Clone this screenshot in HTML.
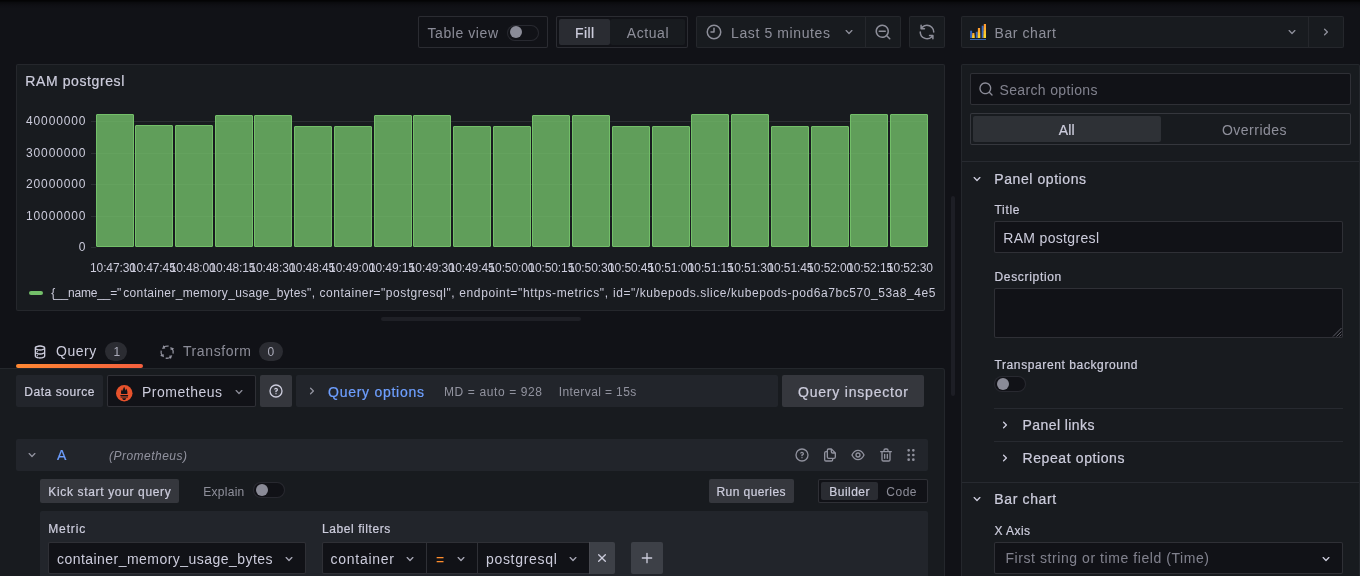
<!DOCTYPE html>
<html lang="en"><head><meta charset="utf-8"><title>Edit panel - RAM postgresl - Grafana</title>
<style>
*{box-sizing:border-box;margin:0;padding:0}
html,body{width:1360px;height:576px;overflow:hidden;background:#111217}
body{position:relative;font-family:"Liberation Sans",Arial,sans-serif;color:rgb(204,204,220)}
.a{position:absolute}
.t{position:absolute;white-space:pre;line-height:20px;height:20px}
.m{-webkit-text-stroke:0.22px currentColor}
.box{position:absolute;border:1px solid rgba(204,204,220,0.075);border-radius:2px}
.btn{position:absolute;background:rgba(204,204,220,0.16);border-radius:2px}
.inp{position:absolute;background:#111217;border:1px solid rgba(204,204,220,0.16);border-radius:2px}
.sec{position:absolute;background:#22252b;border-radius:2px}
.hl{position:absolute;height:1px;background:rgba(204,204,220,0.09)}
.vl{position:absolute;width:1px;background:rgba(204,204,220,0.12)}
.tog{position:absolute;width:32px;height:16px;border-radius:8px;background:#111217;border:1px solid rgba(204,204,220,0.13)}
.tog i{position:absolute;left:2px;top:1px;width:12px;height:12px;border-radius:6px;background:rgba(204,204,220,0.65)}
svg{position:absolute;overflow:visible}
.ic{fill:none;stroke:rgba(204,204,220,0.65);stroke-width:1.4;stroke-linecap:round;stroke-linejoin:round}
.ip{fill:none;stroke:rgb(204,204,220);stroke-width:1.4;stroke-linecap:round;stroke-linejoin:round}
#texts{position:absolute;left:0;top:0;width:1360px;height:576px;will-change:transform}

</style></head><body>
<!-- ===== toolbar ===== -->
<div class="box" style="left:418px;top:16px;width:130px;height:32px;background:#111217;border-color:rgba(204,204,220,0.14)"></div>
<div class="tog" style="left:507px;top:25px"><i style="top:0"></i></div>
<div class="box" style="left:556px;top:16px;width:132px;height:32px;background:#111217;border-color:rgba(204,204,220,0.14)"></div>
<div class="a" style="left:610px;top:19px;width:75px;height:26px;background:#181b1f;border-radius:2px"></div>
<div class="a" style="left:559px;top:19px;width:51px;height:26px;background:#2a2c32;border-radius:2px"></div>
<div class="box" style="left:696px;top:16px;width:170px;height:32px;background:#181b1f;border-radius:2px 0 0 2px"></div>
<div class="box" style="left:865px;top:16px;width:36px;height:32px;background:#181b1f;border-radius:0 2px 2px 0"></div>
<div class="box" style="left:909px;top:16px;width:36px;height:32px;background:#181b1f"></div>
<div class="box" style="left:961px;top:16px;width:348px;height:32px;background:#181b1f;border-radius:2px 0 0 2px"></div>
<div class="box" style="left:1308px;top:16px;width:36px;height:32px;background:#181b1f;border-radius:0 2px 2px 0"></div>
<!-- clock -->
<svg style="left:705px;top:23px" width="18" height="18" viewBox="0 0 24 24"><path fill="rgba(204,204,220,0.65)" d="M12,2A10,10,0,1,0,22,12,10.011,10.011,0,0,0,12,2Zm0,18a8,8,0,1,1,8-8A8.009,8.009,0,0,1,12,20ZM12,6a1,1,0,0,0-1,1v4H8a1,1,0,0,0,0,2h4a1,1,0,0,0,1-1V7A1,1,0,0,0,12,6Z"/></svg>
<!-- chevrons -->
<svg style="left:841px;top:24px" width="16" height="16" viewBox="0 0 24 24"><path fill="rgba(204,204,220,0.65)" d="M17,9.17a1,1,0,0,0-1.41,0L12,12.71,8.46,9.17a1,1,0,0,0-1.41,0,1,1,0,0,0,0,1.42l4.24,4.24a1,1,0,0,0,1.42,0L17,10.590A1,1,0,0,0,17,9.170Z"/></svg>
<svg style="left:1284px;top:24px" width="16" height="16" viewBox="0 0 24 24"><path fill="rgba(204,204,220,0.65)" d="M17,9.17a1,1,0,0,0-1.41,0L12,12.71,8.46,9.17a1,1,0,0,0-1.41,0,1,1,0,0,0,0,1.42l4.24,4.24a1,1,0,0,0,1.42,0L17,10.590A1,1,0,0,0,17,9.170Z"/></svg>
<svg style="left:1318px;top:24px" width="16" height="16" viewBox="0 0 24 24"><path fill="rgba(204,204,220,0.65)" d="M14.83,11.29,10.59,7.05a1,1,0,0,0-1.42,0,1,1,0,0,0,0,1.41L12.71,12,9.170,15.540a1,1,0,0,0,0,1.410,1,1,0,0,0,.710.290,1,1,0,0,0,.710-.290l4.240-4.240A1,1,0,0,0,14.830,11.290Z"/></svg>
<!-- zoom out -->
<svg style="left:874px;top:23px" width="18" height="18" viewBox="0 0 24 24"><path fill="rgba(204,204,220,0.65)" d="M21.71,20.29,18,16.610A9,9,0,1,0,16.610,18l3.680,3.680a1,1,0,0,0,1.420,0A1,1,0,0,0,21.710,20.290ZM11,18a7,7,0,1,1,7-7A7,7,0,0,1,11,18Zm4-8H7a1,1,0,0,0,0,2h8a1,1,0,0,0,0-2Z"/></svg>
<!-- refresh -->
<svg style="left:918px;top:23px" width="18" height="18" viewBox="0 0 24 24"><path fill="rgba(204,204,220,0.65)" d="M19.91,15.51H15.38a1,1,0,0,0,0,2h2.4A8,8,0,0,1,4,12a1,1,0,0,0-2,0,10,10,0,0,0,16.880,7.230V21a1,1,0,0,0,2,0V16.500A1,1,0,0,0,19.910,15.510ZM12,2A10,10,0,0,0,5.120,4.770V3a1,1,0,0,0-2,0V7.500a1,1,0,0,0,1,1h4.500a1,1,0,0,0,0-2h-2.400A8,8,0,0,1,20,12a1,1,0,0,0,2,0A10,10,0,0,0,12,2Z"/></svg>
<!-- bar chart icon -->
<svg style="left:970px;top:24px" width="16" height="16" viewBox="0 0 16 16"><g fill="#3a69bf"><rect x="0.1" y="6.7" width="2" height="7.3"/><rect x="5.8" y="7.8" width="2" height="6.2"/><rect x="11.7" y="1.7" width="2" height="12.3"/><rect x="0" y="15" width="16" height="1" fill="#3865ab"/></g><g><rect x="2.3" y="9.00" width="2.1" height="5.00" fill="#fea62f"/><rect x="2.3" y="10.67" width="2.1" height="3.33" fill="#fcbd2d"/><rect x="2.3" y="12.33" width="2.1" height="1.67" fill="#fbd52b"/><rect x="7.9" y="4.00" width="2.2" height="10.00" fill="#ff9f30"/><rect x="7.9" y="6.50" width="2.2" height="7.50" fill="#fdb12e"/><rect x="7.9" y="9.00" width="2.2" height="5.00" fill="#fcc32c"/><rect x="7.9" y="11.50" width="2.2" height="2.50" fill="#fbd52b"/><rect x="13.8" y="0.00" width="2.2" height="14.00" fill="#ff9d30"/><rect x="13.8" y="3.50" width="2.2" height="10.50" fill="#fdaf2e"/><rect x="13.8" y="7.00" width="2.2" height="7.00" fill="#fcc22c"/><rect x="13.8" y="10.50" width="2.2" height="3.50" fill="#fbd52b"/></g></svg>

<!-- ===== panel ===== -->
<div class="box" style="left:16px;top:64px;width:929px;height:247px;background:#181b1f"></div>
<svg id="chart" style="left:0;top:0" width="960" height="320" viewBox="0 0 960 320">
<g id="grid" stroke="rgba(240,250,255,0.09)" stroke-width="1">
<path d="M91 121.5H928M91 153.5H928M91 184.5H928M91 216.5H928M91 247.5H96"/>
</g>
<g id="bars" fill="rgba(115,191,105,0.8)" stroke="#73bf69" stroke-width="1">
<rect rx="0.5" x="96.5" y="114.5" width="37" height="132"/>
<rect rx="0.5" x="135.5" y="125.5" width="37" height="121"/>
<rect rx="0.5" x="175.5" y="125.5" width="37" height="121"/>
<rect rx="0.5" x="215.5" y="115.5" width="37" height="131"/>
<rect rx="0.5" x="254.5" y="115.5" width="37" height="131"/>
<rect rx="0.5" x="294.5" y="126.5" width="37" height="120"/>
<rect rx="0.5" x="334.5" y="126.5" width="37" height="120"/>
<rect rx="0.5" x="374.5" y="115.5" width="37" height="131"/>
<rect rx="0.5" x="413.5" y="115.5" width="37" height="131"/>
<rect rx="0.5" x="453.5" y="126.5" width="37" height="120"/>
<rect rx="0.5" x="493.5" y="126.5" width="37" height="120"/>
<rect rx="0.5" x="532.5" y="115.5" width="37" height="131"/>
<rect rx="0.5" x="572.5" y="115.5" width="37" height="131"/>
<rect rx="0.5" x="612.5" y="126.5" width="37" height="120"/>
<rect rx="0.5" x="652.5" y="126.5" width="37" height="120"/>
<rect rx="0.5" x="691.5" y="114.5" width="37" height="132"/>
<rect rx="0.5" x="731.5" y="114.5" width="37" height="132"/>
<rect rx="0.5" x="771.5" y="126.5" width="37" height="120"/>
<rect rx="0.5" x="811.5" y="126.5" width="37" height="120"/>
<rect rx="0.5" x="850.5" y="114.5" width="37" height="132"/>
<rect rx="0.5" x="890.5" y="114.5" width="37" height="132"/>
</g>
</svg>
<div class="a" style="left:29px;top:291px;width:14px;height:4px;border-radius:2px;background:#73bf69"></div>

<!-- ===== tabs ===== -->
<div class="a" style="left:16px;top:364px;width:127px;height:4px;border-radius:2px;background:linear-gradient(90deg,#ff8833 0%,#f55f3e 100%)"></div>
<div class="a" style="left:105px;top:342px;width:22px;height:19px;border-radius:10px;background:rgba(204,204,220,0.14)"></div>
<div class="a" style="left:259px;top:342px;width:24px;height:19px;border-radius:10px;background:rgba(204,204,220,0.14)"></div>
<!-- database icon -->
<svg style="left:32px;top:344px" width="16" height="16" viewBox="0 0 24 24"><path fill="rgb(204,204,220)" d="M8,16.5a1,1,0,1,0,1,1A1,1,0,0,0,8,16.5ZM12,2C8,2,4,3.37,4,6V18c0,2.630,4,4,8,4s8-1.370,8-4V6C20,3.370,16,2,12,2Zm6,16c0,.710-2.280,2-6,2s-6-1.290-6-2V14.730A13.160,13.160,0,0,0,12,16a13.160,13.160,0,0,0,6-1.270Zm0-6c0,.710-2.280,2-6,2s-6-1.290-6-2V8.730A13.160,13.160,0,0,0,12,10a13.160,13.160,0,0,0,6-1.270ZM12,8C8.280,8,6,6.710,6,6s2.280-2,6-2,6,1.290,6,2S15.720,8,12,8ZM8,10.500a1,1,0,1,0,1,1A1,1,0,0,0,8,10.500Z"/></svg>
<!-- transform icon -->
<svg style="left:159px;top:344px" width="16" height="16" viewBox="-8.150 -8.150 16 16"><g fill="rgba(204,204,220,0.65)"><g transform="rotate(0)"><path d="M-5.09 -3.18L-3.63 -7.13L-1.82 -3.56Z"/><path d="M-3.23 -5.17A6.1 6.1 0 0 1 1.48 -5.92" stroke="rgba(204,204,220,0.65)" stroke-width="1.300" fill="none"/></g><g transform="rotate(90)"><path d="M-5.09 -3.18L-3.63 -7.13L-1.82 -3.56Z"/><path d="M-3.23 -5.17A6.1 6.1 0 0 1 1.48 -5.92" stroke="rgba(204,204,220,0.65)" stroke-width="1.300" fill="none"/></g><g transform="rotate(180)"><path d="M-5.09 -3.18L-3.63 -7.13L-1.82 -3.56Z"/><path d="M-3.23 -5.17A6.1 6.1 0 0 1 1.48 -5.92" stroke="rgba(204,204,220,0.65)" stroke-width="1.300" fill="none"/></g><g transform="rotate(270)"><path d="M-5.09 -3.18L-3.63 -7.13L-1.82 -3.56Z"/><path d="M-3.23 -5.17A6.1 6.1 0 0 1 1.48 -5.92" stroke="rgba(204,204,220,0.65)" stroke-width="1.300" fill="none"/></g></g></svg>

<!-- ===== query content ===== -->
<div class="a" style="left:-4px;top:368px;width:949px;height:220px;background:#181b1f;border:1px solid rgba(204,204,220,0.07);border-radius:3px"></div>
<div class="sec" style="left:16px;top:375px;width:87px;height:32px"></div>
<div class="inp" style="left:107px;top:375px;width:149px;height:32px"></div>
<div class="btn" style="left:260px;top:375px;width:32px;height:32px"></div>
<div class="sec" style="left:296px;top:375px;width:482px;height:32px"></div>
<div class="btn" style="left:782px;top:375px;width:142px;height:32px"></div>
<div class="sec" style="left:16px;top:439px;width:912px;height:32px"></div>
<div class="btn" style="left:40px;top:479px;width:139px;height:24px"></div>
<div class="tog" style="left:253px;top:482px"><i></i></div>
<div class="btn" style="left:709px;top:479px;width:85px;height:24px"></div>
<div class="box" style="left:818px;top:479px;width:110px;height:24px;background:#111217;border-color:rgba(204,204,220,0.16)"></div>
<div class="a" style="left:821px;top:482px;width:57px;height:18px;background:#2a2c32;border-radius:2px"></div>
<div class="sec" style="left:40px;top:511px;width:888px;height:80px"></div>
<div class="inp" style="left:48px;top:542px;width:258px;height:32px"></div>
<div class="inp" style="left:322px;top:542px;width:105px;height:32px;border-radius:2px 0 0 2px"></div>
<div class="inp" style="left:426px;top:542px;width:52px;height:32px;border-radius:0"></div>
<div class="inp" style="left:477px;top:542px;width:113px;height:32px;border-radius:0"></div>
<div class="btn" style="left:589px;top:542px;width:26px;height:32px;border-radius:0 2px 2px 0"></div>
<div class="btn" style="left:631px;top:542px;width:32px;height:32px"></div>
<!-- prometheus icon -->
<svg style="left:115.800px;top:384.500px" width="16.5" height="16.5" viewBox="0 0 16.5 16.5"><circle cx="8.25" cy="8.25" r="8.25" fill="#e6522c"/><path fill="#111217" d="M8.2 1.700C8.900 3.400 9.300 4.500 9.300 5.700 9.800 5.100 10 4.300 10 3.600 11.300 5.200 11.700 7 11.300 8.900H5.200C4.700 7.200 5.100 5.600 6.200 4.200 6.300 4.900 6.500 5.500 7 5.900 6.900 4.400 7.400 3.100 8.200 1.700ZM4.400 9.900H12.100V10.900H4.400ZM4.600 11.600H11.900V12.500H4.600ZM6.100 13.200H10.300C10 14.400 9.200 15 8.200 15S6.400 14.400 6.100 13.200Z"/></svg>
<svg style="left:231px;top:384px" width="16" height="16" viewBox="0 0 24 24"><path fill="rgba(204,204,220,0.65)" d="M17,9.17a1,1,0,0,0-1.41,0L12,12.71,8.46,9.17a1,1,0,0,0-1.41,0,1,1,0,0,0,0,1.42l4.24,4.24a1,1,0,0,0,1.42,0L17,10.590A1,1,0,0,0,17,9.170Z"/></svg>
<!-- help btn -->
<svg style="left:268px;top:383px" width="16" height="16" viewBox="0 0 24 24"><path fill="rgb(204,204,220)" d="M11.29,15.29a1.58,1.58,0,0,0-.12.15.76.76,0,0,0-.09.18.64.64,0,0,0-.06.18,1.36,1.36,0,0,0,0,.2.84.84,0,0,0,.08.38.9.9,0,0,0,.54.54.94.94,0,0,0,.76,0,.9.9,0,0,0,.54-.54A1,1,0,0,0,13,16a1,1,0,0,0-.29-.71A1,1,0,0,0,11.290,15.290ZM12,2A10,10,0,1,0,22,12,10,10,0,0,0,12,2Zm0,18a8,8,0,1,1,8-8A8,8,0,0,1,12,20ZM12,7A3,3,0,0,0,9.4,8.500a1,1,0,1,0,1.730,1A1,1,0,0,1,12,9a1,1,0,0,1,0,2,1,1,0,0,0-1,1v1a1,1,0,0,0,2,0v-.180A3,3,0,0,0,12,7Z"/></svg>
<svg style="left:303.75px;top:383px" width="16" height="16" viewBox="0 0 24 24"><path fill="rgba(204,204,220,0.65)" d="M14.83,11.29,10.59,7.05a1,1,0,0,0-1.42,0,1,1,0,0,0,0,1.41L12.71,12,9.170,15.540a1,1,0,0,0,0,1.410,1,1,0,0,0,.710.290,1,1,0,0,0,.710-.290l4.240-4.240A1,1,0,0,0,14.830,11.290Z"/></svg>
<!-- row A icons -->
<svg style="left:24px;top:447px" width="16" height="16" viewBox="0 0 24 24"><path fill="rgba(204,204,220,0.65)" d="M17,9.17a1,1,0,0,0-1.41,0L12,12.71,8.46,9.17a1,1,0,0,0-1.41,0,1,1,0,0,0,0,1.42l4.24,4.24a1,1,0,0,0,1.42,0L17,10.590A1,1,0,0,0,17,9.170Z"/></svg>
<svg style="left:794px;top:447px" width="16" height="16" viewBox="0 0 24 24"><path fill="rgba(204,204,220,0.65)" d="M11.29,15.29a1.58,1.58,0,0,0-.12.15.76.76,0,0,0-.09.18.64.64,0,0,0-.06.18,1.36,1.36,0,0,0,0,.2.84.84,0,0,0,.08.38.9.9,0,0,0,.54.54.94.94,0,0,0,.76,0,.9.9,0,0,0,.54-.54A1,1,0,0,0,13,16a1,1,0,0,0-.29-.71A1,1,0,0,0,11.290,15.290ZM12,2A10,10,0,1,0,22,12,10,10,0,0,0,12,2Zm0,18a8,8,0,1,1,8-8A8,8,0,0,1,12,20ZM12,7A3,3,0,0,0,9.4,8.500a1,1,0,1,0,1.730,1A1,1,0,0,1,12,9a1,1,0,0,1,0,2,1,1,0,0,0-1,1v1a1,1,0,0,0,2,0v-.180A3,3,0,0,0,12,7Z"/></svg>
<svg style="left:822px;top:447px" width="16" height="16" viewBox="0 0 24 24"><path fill="rgba(204,204,220,0.65)" d="M21,8.94a1.31,1.31,0,0,0-.06-.27l0-.09a1.07,1.07,0,0,0-.19-.28h0l-6-6h0a1.07,1.07,0,0,0-.28-.19.32.32,0,0,0-.09,0A.88.88,0,0,0,14.050,2H10A3,3,0,0,0,7,5V6H6A3,3,0,0,0,3,9V19a3,3,0,0,0,3,3h8a3,3,0,0,0,3-3V18h1a3,3,0,0,0,3-3V9S21,9,21,8.940ZM15,5.410,17.590,8H16a1,1,0,0,1-1-1ZM15,19a1,1,0,0,1-1,1H6a1,1,0,0,1-1-1V9A1,1,0,0,1,6,8H7v7a3,3,0,0,0,3,3h5Zm4-4a1,1,0,0,1-1,1H10a1,1,0,0,1-1-1V5a1,1,0,0,1,1-1h3V7a3,3,0,0,0,3,3h3Z"/></svg>
<svg style="left:850px;top:447px" width="16" height="16" viewBox="0 0 24 24"><path fill="rgba(204,204,220,0.65)" d="M21.92,11.6C19.9,6.91,16.1,4,12,4S4.1,6.91,2.08,11.6a1,1,0,0,0,0,.8C4.1,17.09,7.9,20,12,20s7.9-2.91,9.92-7.6A1,1,0,0,0,21.920,11.600ZM12,18c-3.170,0-6.170-2.290-7.900-6C5.830,8.290,8.830,6,12,6s6.170,2.290,7.900,6C18.170,15.710,15.170,18,12,18ZM12,8a4,4,0,1,0,4,4A4,4,0,0,0,12,8Zm0,6a2,2,0,1,1,2-2A2,2,0,0,1,12,14Z"/></svg>
<svg style="left:878px;top:447px" width="16" height="16" viewBox="0 0 24 24"><path fill="rgba(204,204,220,0.65)" d="M10,18a1,1,0,0,0,1-1V11a1,1,0,0,0-2,0v6A1,1,0,0,0,10,18ZM20,6H16V5a3,3,0,0,0-3-3H11A3,3,0,0,0,8,5V6H4A1,1,0,0,0,4,8H5V19a3,3,0,0,0,3,3h8a3,3,0,0,0,3-3V8h1a1,1,0,0,0,0-2ZM10,5a1,1,0,0,1,1-1h2a1,1,0,0,1,1,1V6H10Zm7,14a1,1,0,0,1-1,1H8a1,1,0,0,1-1-1V8H17Zm-3-1a1,1,0,0,0,1-1V11a1,1,0,0,0-2,0v6A1,1,0,0,0,14,18Z"/></svg>
<svg style="left:903px;top:447px" width="16" height="16" viewBox="0 0 24 24"><path fill="rgba(204,204,220,0.65)" d="M8.5,10a2,2,0,1,0,2,2A2,2,0,0,0,8.5,10Zm0,7a2,2,0,1,0,2,2A2,2,0,0,0,8.5,17Zm7-10a2,2,0,1,0-2-2A2,2,0,0,0,15.5,7Zm-7-4a2,2,0,1,0,2,2A2,2,0,0,0,8.500,3Zm7,14a2,2,0,1,0,2,2A2,2,0,0,0,15.500,17Zm0-7a2,2,0,1,0,2,2A2,2,0,0,0,15.500,10Z"/></svg>
<!-- select chevrons -->
<svg style="left:281px;top:551px" width="16" height="16" viewBox="0 0 24 24"><path fill="rgba(204,204,220,0.8)" d="M17,9.17a1,1,0,0,0-1.41,0L12,12.71,8.46,9.17a1,1,0,0,0-1.41,0,1,1,0,0,0,0,1.42l4.24,4.24a1,1,0,0,0,1.42,0L17,10.590A1,1,0,0,0,17,9.170Z"/></svg>
<svg style="left:402px;top:551px" width="16" height="16" viewBox="0 0 24 24"><path fill="rgba(204,204,220,0.8)" d="M17,9.17a1,1,0,0,0-1.41,0L12,12.71,8.46,9.17a1,1,0,0,0-1.41,0,1,1,0,0,0,0,1.42l4.24,4.24a1,1,0,0,0,1.42,0L17,10.590A1,1,0,0,0,17,9.170Z"/></svg>
<svg style="left:453px;top:551px" width="16" height="16" viewBox="0 0 24 24"><path fill="rgba(204,204,220,0.8)" d="M17,9.17a1,1,0,0,0-1.41,0L12,12.71,8.46,9.17a1,1,0,0,0-1.41,0,1,1,0,0,0,0,1.42l4.24,4.24a1,1,0,0,0,1.42,0L17,10.590A1,1,0,0,0,17,9.170Z"/></svg>
<svg style="left:565px;top:551px" width="16" height="16" viewBox="0 0 24 24"><path fill="rgba(204,204,220,0.8)" d="M17,9.17a1,1,0,0,0-1.41,0L12,12.71,8.46,9.17a1,1,0,0,0-1.41,0,1,1,0,0,0,0,1.42l4.24,4.24a1,1,0,0,0,1.42,0L17,10.590A1,1,0,0,0,17,9.170Z"/></svg>
<svg style="left:593.75px;top:550px" width="16" height="16" viewBox="0 0 24 24"><path fill="rgb(204,204,220)" d="M13.41,12l4.3-4.29a1,1,0,1,0-1.42-1.420L12,10.590,7.710,6.290A1,1,0,0,0,6.290,7.710L10.590,12l-4.300,4.290a1,1,0,0,0,0,1.420,1,1,0,0,0,1.420,0L12,13.410l4.290,4.300a1,1,0,0,0,1.420,0,1,1,0,0,0,0-1.420Z"/></svg>
<svg style="left:639px;top:550px" width="16" height="16" viewBox="0 0 24 24"><path fill="rgb(204,204,220)" d="M19,11H13V5a1,1,0,0,0-2,0v6H5a1,1,0,0,0,0,2h6v6a1,1,0,0,0,2,0V13h6a1,1,0,0,0,0-2Z"/></svg>

<!-- splitter handle -->
<div class="a" style="left:381px;top:317px;width:200px;height:4px;border-radius:2px;background:rgba(204,204,220,0.08)"></div>
<!-- scrollbar -->
<div class="a" style="left:951px;top:196px;width:4px;height:200px;border-radius:2px;background:rgba(204,204,220,0.07)"></div>

<!-- ===== right pane ===== -->
<div class="a" style="left:961px;top:64px;width:399px;height:530px;background:#181b1f;border:1px solid rgba(204,204,220,0.07);border-radius:2px"></div>
<div class="inp" style="left:970px;top:73px;width:381px;height:32px"></div>
<svg style="left:978px;top:81px" width="16" height="16" viewBox="0 0 24 24"><path fill="rgba(204,204,220,0.65)" d="M21.71,20.29,18,16.610A9,9,0,1,0,16.610,18l3.680,3.680a1,1,0,0,0,1.420,0A1,1,0,0,0,21.710,20.290ZM11,18a7,7,0,1,1,7-7A7,7,0,0,1,11,18Z"/></svg>
<div class="box" style="left:970px;top:113px;width:381px;height:32px;background:#181b1f;border-color:rgba(204,204,220,0.16)"></div>
<div class="a" style="left:973px;top:116px;width:188px;height:26px;background:#2e3136;border-radius:2px"></div>
<div class="hl" style="left:962px;top:161px;width:397px"></div>
<svg style="left:969px;top:171px" width="16" height="16" viewBox="0 0 24 24"><path fill="rgb(204,204,220)" d="M17,9.17a1,1,0,0,0-1.41,0L12,12.71,8.46,9.17a1,1,0,0,0-1.41,0,1,1,0,0,0,0,1.42l4.24,4.24a1,1,0,0,0,1.42,0L17,10.590A1,1,0,0,0,17,9.170Z"/></svg>
<div class="inp" style="left:994px;top:221px;width:349px;height:32px"></div>
<div class="inp" style="left:994px;top:288px;width:349px;height:50px"></div>
<svg style="left:1332px;top:327px" width="10" height="10" viewBox="0 0 10 10"><path d="M9.500 1 1 9.500M9.500 4.500 4.500 9.500M9.500 7.500 7.500 9.500" stroke="rgba(204,204,220,0.4)" stroke-width="1" fill="none"/></svg>
<div class="tog" style="left:994px;top:376px"><i></i></div>
<div class="hl" style="left:994px;top:408px;width:349px"></div>
<svg style="left:996.5px;top:417px" width="16" height="16" viewBox="0 0 24 24"><path fill="rgb(204,204,220)" d="M14.83,11.29,10.59,7.05a1,1,0,0,0-1.42,0,1,1,0,0,0,0,1.41L12.71,12,9.170,15.540a1,1,0,0,0,0,1.410,1,1,0,0,0,.710.290,1,1,0,0,0,.710-.290l4.240-4.240A1,1,0,0,0,14.830,11.290Z"/></svg>
<div class="hl" style="left:994px;top:441px;width:349px"></div>
<svg style="left:996.5px;top:450px" width="16" height="16" viewBox="0 0 24 24"><path fill="rgb(204,204,220)" d="M14.83,11.29,10.59,7.05a1,1,0,0,0-1.42,0,1,1,0,0,0,0,1.41L12.71,12,9.170,15.540a1,1,0,0,0,0,1.410,1,1,0,0,0,.710.290,1,1,0,0,0,.710-.290l4.240-4.240A1,1,0,0,0,14.830,11.290Z"/></svg>
<div class="hl" style="left:962px;top:482px;width:397px"></div>
<svg style="left:969px;top:491px" width="16" height="16" viewBox="0 0 24 24"><path fill="rgb(204,204,220)" d="M17,9.17a1,1,0,0,0-1.41,0L12,12.71,8.46,9.17a1,1,0,0,0-1.41,0,1,1,0,0,0,0,1.42l4.24,4.24a1,1,0,0,0,1.42,0L17,10.590A1,1,0,0,0,17,9.170Z"/></svg>
<div class="inp" style="left:994px;top:542px;width:349px;height:32px"></div>
<svg style="left:1317.75px;top:551px" width="16" height="16" viewBox="0 0 24 24"><path fill="rgb(204,204,220)" d="M17,9.17a1,1,0,0,0-1.41,0L12,12.71,8.46,9.17a1,1,0,0,0-1.41,0,1,1,0,0,0,0,1.42l4.24,4.24a1,1,0,0,0,1.42,0L17,10.590A1,1,0,0,0,17,9.170Z"/></svg>

<!-- top shadow -->
<div class="a" style="left:0;top:0;width:1360px;height:10px;background:linear-gradient(180deg,rgba(0,0,0,0.85) 0%,rgba(0,0,0,0.7) 12%,rgba(0,0,0,0.4) 25%,rgba(0,0,0,0.17) 50%,rgba(0,0,0,0.03) 80%,rgba(0,0,0,0) 100%)"></div>

<div id="texts">
<span class="t" style="left:427.50px;top:22.80px;font-size:14px;color:rgba(204,204,220,0.65);letter-spacing:0.569px;">Table view</span>
<span class="t m" style="left:575.00px;top:22.80px;font-size:14px;color:rgb(204,204,220);letter-spacing:0.370px;">Fill</span>
<span class="t" style="left:626.75px;top:22.80px;font-size:14px;color:rgba(204,204,220,0.65);letter-spacing:0.566px;">Actual</span>
<span class="t" style="left:731.00px;top:22.80px;font-size:14px;color:rgba(204,204,220,0.65);letter-spacing:0.611px;">Last 5 minutes</span>
<span class="t" style="left:994.50px;top:22.80px;font-size:14px;color:rgba(204,204,220,0.65);letter-spacing:0.586px;">Bar chart</span>
<span class="t" style="left:999.50px;top:79.80px;font-size:14px;color:rgba(204,204,220,0.6);letter-spacing:0.353px;">Search options</span>
<span class="t m" style="left:1058.75px;top:119.50px;font-size:14px;color:rgb(204,204,220);letter-spacing:0.094px;">All</span>
<span class="t" style="left:1222.00px;top:119.50px;font-size:14px;color:rgba(204,204,220,0.65);letter-spacing:0.477px;">Overrides</span>
<span class="t m" style="left:994.25px;top:168.75px;font-size:14px;color:rgb(204,204,220);letter-spacing:0.576px;">Panel options</span>
<span class="t m" style="left:994.50px;top:200.00px;font-size:12px;color:rgb(204,204,220);letter-spacing:0.691px;">Title</span>
<span class="t" style="left:1003.25px;top:228.00px;font-size:14px;color:rgb(204,204,220);letter-spacing:0.328px;">RAM postgresl</span>
<span class="t m" style="left:994.50px;top:266.75px;font-size:12px;color:rgb(204,204,220);letter-spacing:0.672px;">Description</span>
<span class="t m" style="left:994.50px;top:354.50px;font-size:12px;color:rgb(204,204,220);letter-spacing:0.604px;">Transparent background</span>
<span class="t m" style="left:1022.50px;top:415.00px;font-size:14px;color:rgb(204,204,220);letter-spacing:0.430px;">Panel links</span>
<span class="t m" style="left:1022.50px;top:448.00px;font-size:14px;color:rgb(204,204,220);letter-spacing:0.601px;">Repeat options</span>
<span class="t m" style="left:994.25px;top:489.00px;font-size:14px;color:rgb(204,204,220);letter-spacing:0.648px;">Bar chart</span>
<span class="t m" style="left:994.50px;top:520.50px;font-size:12px;color:rgb(204,204,220);letter-spacing:0.428px;">X Axis</span>
<span class="t" style="left:1005.50px;top:548.00px;font-size:14px;color:rgba(204,204,220,0.6);letter-spacing:0.566px;">First string or time field (Time)</span>
<span class="t m" style="left:25.25px;top:71.40px;font-size:14px;color:rgb(204,204,220);letter-spacing:0.599px;">RAM postgresl</span>
<span class="t" style="left:26.00px;top:110.55px;font-size:12px;color:rgb(204,204,220);letter-spacing:0.873px;">40000000</span>
<span class="t" style="left:26.00px;top:142.55px;font-size:12px;color:rgb(204,204,220);letter-spacing:0.873px;">30000000</span>
<span class="t" style="left:26.00px;top:173.55px;font-size:12px;color:rgb(204,204,220);letter-spacing:0.873px;">20000000</span>
<span class="t" style="left:26.00px;top:205.55px;font-size:12px;color:rgb(204,204,220);letter-spacing:0.873px;">10000000</span>
<span class="t" style="left:78.70px;top:236.60px;font-size:12px;color:rgb(204,204,220);letter-spacing:0.000px;">0</span>
<span class="t" style="left:90.00px;top:257.90px;font-size:12px;color:rgb(204,204,220);letter-spacing:-0.103px;">10:47:30</span>
<span class="t" style="left:129.85px;top:257.90px;font-size:12px;color:rgb(204,204,220);letter-spacing:-0.103px;">10:47:45</span>
<span class="t" style="left:169.70px;top:257.90px;font-size:12px;color:rgb(204,204,220);letter-spacing:-0.103px;">10:48:00</span>
<span class="t" style="left:209.55px;top:257.90px;font-size:12px;color:rgb(204,204,220);letter-spacing:-0.103px;">10:48:15</span>
<span class="t" style="left:249.40px;top:257.90px;font-size:12px;color:rgb(204,204,220);letter-spacing:-0.103px;">10:48:30</span>
<span class="t" style="left:289.25px;top:257.90px;font-size:12px;color:rgb(204,204,220);letter-spacing:-0.103px;">10:48:45</span>
<span class="t" style="left:329.10px;top:257.90px;font-size:12px;color:rgb(204,204,220);letter-spacing:-0.103px;">10:49:00</span>
<span class="t" style="left:368.95px;top:257.90px;font-size:12px;color:rgb(204,204,220);letter-spacing:-0.103px;">10:49:15</span>
<span class="t" style="left:408.80px;top:257.90px;font-size:12px;color:rgb(204,204,220);letter-spacing:-0.103px;">10:49:30</span>
<span class="t" style="left:448.65px;top:257.90px;font-size:12px;color:rgb(204,204,220);letter-spacing:-0.103px;">10:49:45</span>
<span class="t" style="left:488.50px;top:257.90px;font-size:12px;color:rgb(204,204,220);letter-spacing:-0.103px;">10:50:00</span>
<span class="t" style="left:528.35px;top:257.90px;font-size:12px;color:rgb(204,204,220);letter-spacing:-0.103px;">10:50:15</span>
<span class="t" style="left:568.20px;top:257.90px;font-size:12px;color:rgb(204,204,220);letter-spacing:-0.103px;">10:50:30</span>
<span class="t" style="left:608.05px;top:257.90px;font-size:12px;color:rgb(204,204,220);letter-spacing:-0.103px;">10:50:45</span>
<span class="t" style="left:647.90px;top:257.90px;font-size:12px;color:rgb(204,204,220);letter-spacing:-0.103px;">10:51:00</span>
<span class="t" style="left:687.75px;top:257.90px;font-size:12px;color:rgb(204,204,220);letter-spacing:-0.103px;">10:51:15</span>
<span class="t" style="left:727.60px;top:257.90px;font-size:12px;color:rgb(204,204,220);letter-spacing:-0.103px;">10:51:30</span>
<span class="t" style="left:767.45px;top:257.90px;font-size:12px;color:rgb(204,204,220);letter-spacing:-0.103px;">10:51:45</span>
<span class="t" style="left:807.30px;top:257.90px;font-size:12px;color:rgb(204,204,220);letter-spacing:-0.103px;">10:52:00</span>
<span class="t" style="left:847.15px;top:257.90px;font-size:12px;color:rgb(204,204,220);letter-spacing:-0.103px;">10:52:15</span>
<span class="t" style="left:887.00px;top:257.90px;font-size:12px;color:rgb(204,204,220);letter-spacing:-0.103px;">10:52:30</span>
<span class="t" style="left:51.25px;top:283.00px;font-size:12px;color:rgb(204,204,220);letter-spacing:-0.200px;">{__name__="</span>
<span class="t" style="left:123.25px;top:283.00px;font-size:12px;color:rgb(204,204,220);letter-spacing:0.346px;">container_memory_usage_bytes",</span>
<span class="t" style="left:319.50px;top:283.00px;font-size:12px;color:rgb(204,204,220);letter-spacing:0.518px;">container="postgresql",</span>
<span class="t" style="left:459.25px;top:283.00px;font-size:12px;color:rgb(204,204,220);letter-spacing:0.632px;">endpoint="https-metrics",</span>
<span class="t" style="left:613.00px;top:283.00px;font-size:12px;color:rgb(204,204,220);letter-spacing:0.562px;">id="/kubepods.slice/kubepods-pod6a7bc570_53a8_4e5</span>
<span class="t" style="left:56.00px;top:341.00px;font-size:14px;color:rgb(204,204,220);letter-spacing:0.531px;">Query</span>
<span class="t" style="left:113.50px;top:341.75px;font-size:12px;color:rgba(204,204,220,0.8);letter-spacing:0.000px;">1</span>
<span class="t" style="left:183.00px;top:341.00px;font-size:14px;color:rgba(204,204,220,0.65);letter-spacing:0.590px;">Transform</span>
<span class="t" style="left:267.50px;top:341.75px;font-size:12px;color:rgba(204,204,220,0.8);letter-spacing:0.000px;">0</span>
<span class="t m" style="left:24.25px;top:381.50px;font-size:12px;color:rgb(204,204,220);letter-spacing:0.555px;">Data source</span>
<span class="t" style="left:142.00px;top:381.50px;font-size:14px;color:rgb(204,204,220);letter-spacing:0.502px;">Prometheus</span>
<span class="t m" style="left:328.00px;top:381.50px;font-size:14px;color:#6e9fff;letter-spacing:0.736px;">Query options</span>
<span class="t" style="left:444.00px;top:381.50px;font-size:12px;color:rgba(204,204,220,0.65);letter-spacing:0.615px;">MD = auto = 928</span>
<span class="t" style="left:558.75px;top:381.50px;font-size:12px;color:rgba(204,204,220,0.65);letter-spacing:0.394px;">Interval = 15s</span>
<span class="t m" style="left:798.00px;top:381.50px;font-size:14px;color:rgb(204,204,220);letter-spacing:0.798px;">Query inspector</span>
<span class="t m" style="left:57.00px;top:445.00px;font-size:14px;color:#6e9fff;letter-spacing:0.000px;">A</span>
<span class="t" style="left:109.00px;top:445.50px;font-size:12px;color:rgba(204,204,220,0.65);letter-spacing:0.482px;font-style:italic;">(Prometheus)</span>
<span class="t m" style="left:48.25px;top:482.00px;font-size:12px;color:rgb(204,204,220);letter-spacing:0.656px;">Kick start your query</span>
<span class="t" style="left:203.25px;top:482.00px;font-size:12px;color:rgba(204,204,220,0.65);letter-spacing:0.273px;">Explain</span>
<span class="t m" style="left:716.50px;top:482.00px;font-size:12px;color:rgb(204,204,220);letter-spacing:0.428px;">Run queries</span>
<span class="t m" style="left:829.25px;top:482.00px;font-size:12px;color:rgb(204,204,220);letter-spacing:0.482px;">Builder</span>
<span class="t" style="left:886.25px;top:482.00px;font-size:12px;color:rgba(204,204,220,0.65);letter-spacing:0.521px;">Code</span>
<span class="t m" style="left:48.25px;top:519.00px;font-size:12px;color:rgb(204,204,220);letter-spacing:0.866px;">Metric</span>
<span class="t m" style="left:322.00px;top:519.00px;font-size:12px;color:rgb(204,204,220);letter-spacing:0.573px;">Label filters</span>
<span class="t" style="left:57.00px;top:549.00px;font-size:14px;color:rgb(204,204,220);letter-spacing:0.458px;">container_memory_usage_bytes</span>
<span class="t" style="left:330.50px;top:549.00px;font-size:14px;color:rgb(204,204,220);letter-spacing:0.738px;">container</span>
<span class="t" style="left:436.00px;top:549.50px;font-size:14px;color:#ff8c2c;letter-spacing:0.000px;">=</span>
<span class="t" style="left:486.00px;top:549.00px;font-size:14px;color:rgb(204,204,220);letter-spacing:0.684px;">postgresql</span>
</div>
</body></html>
